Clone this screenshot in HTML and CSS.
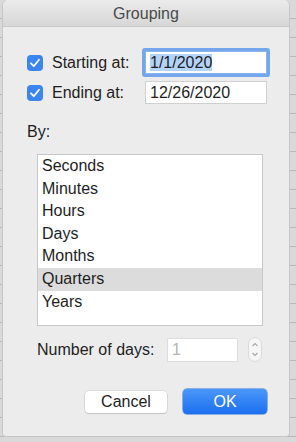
FILE: index.html
```html
<!DOCTYPE html>
<html lang="en">
<head>
  <meta charset="UTF-8">
  <meta name="viewport" content="width=device-width, initial-scale=1.0">
  <title>Grouping</title>
  <link rel="stylesheet" href="styles.css">
</head>
<body>
  <div class="dialog">
    <div class="titlebar">Grouping</div>

    <div class="content">
      <div class="dates">
        <span class="check"><svg width="16" height="16" viewBox="0 0 16 16"><path d="M4 8.3 L6.8 11.2 L12 4.8" fill="none" stroke="#fff" stroke-width="1.8" stroke-linecap="round" stroke-linejoin="round"/></svg></span>
        <span class="label">Starting at:</span>
        <div class="field focused"><span class="sel">1/1/2020</span></div>

        <span class="check"><svg width="16" height="16" viewBox="0 0 16 16"><path d="M4 8.3 L6.8 11.2 L12 4.8" fill="none" stroke="#fff" stroke-width="1.8" stroke-linecap="round" stroke-linejoin="round"/></svg></span>
        <span class="label">Ending at:</span>
        <div class="field">12/26/2020</div>
      </div>

      <div class="by">By:</div>

      <ul class="list">
        <li>Seconds</li>
        <li>Minutes</li>
        <li>Hours</li>
        <li>Days</li>
        <li>Months</li>
        <li class="selected">Quarters</li>
        <li>Years</li>
      </ul>

      <div class="days">
        <span class="label">Number of days:</span>
        <div class="field disabled">1</div>
        <div class="stepper">
          <svg width="14" height="25" viewBox="0 0 14 25"><path d="M4.5 9 L7 6.5 L9.5 9" fill="none" stroke="#a8a8a8" stroke-width="1.1"/><path d="M4.5 16 L7 18.5 L9.5 16" fill="none" stroke="#a8a8a8" stroke-width="1.1"/></svg>
        </div>
      </div>

      <div class="buttons">
        <button class="btn">Cancel</button>
        <button class="btn primary">OK</button>
      </div>
    </div>
  </div>
</body>
</html>
```

FILE: styles.css
```css
body {
  margin: 0;
  width: 296px;
  height: 442px;
  overflow: hidden;
  font-family: "Liberation Sans", Arial, sans-serif;
  color: #1e1e1e;
  background-color: #d9d9d9;
  background-image: repeating-linear-gradient(to bottom, transparent 0, transparent 18px, #b9b9b9 18px, #b9b9b9 19px);
}

.dialog {
  margin-left: 2px;
  width: 288px;
  height: 437px;
  box-sizing: border-box;
  background: #ececec;
  border: 1px solid #c6c6c6;
  border-top: none;
  border-radius: 6px 6px 4px 4px;
  overflow: hidden;
  display: flex;
  flex-direction: column;
}

.titlebar {
  height: 27px;
  box-sizing: border-box;
  border-bottom: 1px solid #c9c9c9;
  background: linear-gradient(#ebebeb, #d7d7d7);
  text-align: center;
  line-height: 27px;
  font-size: 16px;
  color: #4a4a4a;
}

.content {
  padding: 24px 22px 0 24px;
}

.dates {
  display: grid;
  grid-template-columns: 16px 84px 122px;
  column-gap: 9px;
  row-gap: 7px;
  align-items: center;
}

.check {
  width: 16px;
  height: 16px;
  border-radius: 4px;
  background: #3a85ef;
  display: flex;
}

.label {
  font-size: 16px;
  white-space: nowrap;
}

.field {
  height: 23px;
  box-sizing: border-box;
  background: #fff;
  border: 1px solid #d0d0d0;
  font-size: 16px;
  line-height: 21px;
  padding-left: 4px;
}

.field.focused {
  border-color: #8bb3ee;
  box-shadow: 0 0 0 3px #74a6ee;
  border-radius: 1px;
}

.sel {
  background: #b4d3f8;
}

.by {
  margin-top: 19px;
  font-size: 16px;
  line-height: 18px;
}

.list {
  list-style: none;
  margin: 13px 0 0 10px;
  padding: 0;
  width: 226px;
  height: 172px;
  box-sizing: border-box;
  background: #fff;
  border: 1px solid #c8c8c8;
}

.list li {
  height: 22.6px;
  line-height: 22.6px;
  padding-left: 4px;
  font-size: 16px;
}

.list li.selected {
  background: #dcdcdc;
}

.days {
  display: flex;
  align-items: center;
  margin: 11px 0 0 10px;
  height: 25px;
}

.days .label {
  width: 130px;
}

.field.disabled {
  width: 71px;
  height: 24px;
  color: #b4b4b4;
  border-color: #dedede;
}

.stepper {
  margin-left: 10px;
  width: 14px;
  height: 25px;
  box-sizing: border-box;
  border: 1px solid #dadada;
  border-radius: 7px;
  background: #f6f6f6;
  display: flex;
  align-items: center;
  justify-content: center;
}

.stepper svg {
  flex-shrink: 0;
}

.buttons {
  display: flex;
  justify-content: flex-end;
  align-items: center;
  gap: 16px;
  margin-top: 27px;
}

.btn {
  font-family: inherit;
  font-size: 16px;
  color: #1e1e1e;
  width: 82px;
  height: 22px;
  padding: 0;
  border: none;
  border-radius: 4px;
  background: #fff;
  box-shadow: 0 0 0 0.5px #c8c8c8, 0 1px 1px #c4c4c4;
}

.btn.primary {
  width: 84px;
  height: 25px;
  color: #fff;
  background: linear-gradient(#4b97f9, #1c6ff0);
  box-shadow: 0 0 0 0.5px #2a6fd8;
}
```
